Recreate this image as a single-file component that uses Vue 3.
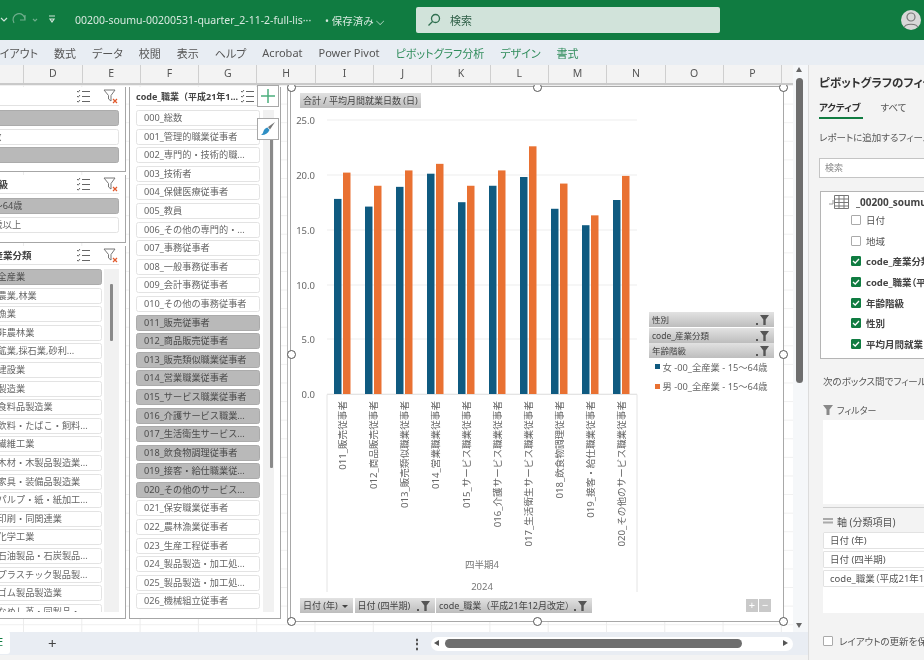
<template>
  <div class="app">
    <header class="titlebar">
      <div class="quick">
        <svg class="ic" width="60" height="24" viewBox="0 0 60 24" fill="none" stroke="#cfe3d8" stroke-width="1.2">
          <path d="M1 10l3 3 3-3" />
          <path d="M14 15a6 6 0 1 1 11-3M25 7v5h-5" stroke="#6fae8c" />
          <path d="M33 11l2 2 2-2" stroke="#6fae8c" />
          <path d="M49 8h6M50 11h4l-2 3z" />
        </svg>
      </div>
      <span class="filename">00200-soumu-00200531-quarter_2-11-2-full-lis···</span>
      <span class="saved">• 保存済み ⌵</span>
      <div class="search">
        <svg width="14" height="14" viewBox="0 0 14 14" fill="none" stroke="#2f6f4f" stroke-width="1.3">
          <circle cx="8.5" cy="5.5" r="4" />
          <path d="M5.5 8.5L1.5 12.5" />
        </svg>
        <span>検索</span>
      </div>
      <div class="avatar">
        <svg width="20" height="20" viewBox="0 0 20 20" fill="none" stroke="#777" stroke-width="1.2">
          <circle cx="10" cy="7" r="4" />
          <path d="M3 18c1-5 13-5 14 0" />
        </svg>
      </div>
    </header>

    <nav class="ribbon">
      <span v-for="t in tabs" :key="t">{{ t }}</span>
      <span v-for="t in contextTabs" :key="t" class="ctx">{{ t }}</span>
    </nav>

    <div class="body">
      <div class="workbook">
        <div class="middle">
          <div class="sheetcol">
            <div class="colhead">
              <span class="colstub"></span>
              <span v-for="c in columns" :key="c" class="col">{{ c }}</span>
            </div>

            <div class="sheet">
              <section v-for="s in slicers" :key="s.id" class="slicer" :class="s.id">
                <div class="slicer-head">
                  <b>{{ s.title }}</b>
                  <svg width="14" height="14" viewBox="0 0 14 14" fill="none" stroke="#666" stroke-width="1">
                    <path d="M1 2l1.2 1.2L4 1M1 7l1.2 1.2L4 6M1 12l1.2 1.2L4 11M6 2.5h8M6 7.5h8M6 12.5h8" />
                  </svg>
                  <svg v-if="s.clear" class="clear" width="15" height="15" viewBox="0 0 15 15" fill="none">
                    <path d="M1 1h11L8 6.5V12L5.5 10V6.5z" stroke="#777" />
                    <path d="M10 10l4 4M14 10l-4 4" stroke="#e2592b" stroke-width="1.2" />
                  </svg>
                </div>
                <div class="slicer-body">
                  <div class="slicer-list">
                    <div v-for="it in s.items" :key="it.label" class="item" :class="{ on: it.on }">{{ it.label }}</div>
                  </div>
                  <div v-if="s.scroll" class="track"><div class="thumb"></div></div>
                </div>
              </section>

              <div class="chart">
                <svg class="plot" width="492" height="534" viewBox="291 87 492 534" font-family="'Noto Sans', 'Noto Sans CJK JP', sans-serif">
                  <g v-for="t in ticks" :key="t.label">
                    <line x1="327" x2="637" :y1="t.y" :y2="t.y" stroke="#ededed" stroke-width="1.2" />
                    <text x="315" :y="t.y + 3.5" text-anchor="end" font-size="9.5" fill="#666">{{ t.label }}</text>
                  </g>
                  <path d="M327 592V394.5H637V592" fill="none" stroke="#e4e4e4" />
                  <g v-for="(g, i) in bars" :key="g.label">
                    <rect :x="334 + i * 31" :y="barY(g.f)" width="7.5" :height="394 - barY(g.f)" fill="#0f5a80" />
                    <rect :x="343 + i * 31" :y="barY(g.m)" width="7.5" :height="394 - barY(g.m)" fill="#e97132" />
                    <text :transform="`translate(${346 + i * 31} 401) rotate(-90)`" text-anchor="end" font-size="9.6" fill="#666">{{ g.label }}</text>
                  </g>
                  <text x="482" y="568" text-anchor="middle" font-size="9.5" fill="#777">四半期4</text>
                  <text x="482" y="590" text-anchor="middle" font-size="9.5" fill="#777">2024</text>
                </svg>

                <div class="field value-field">合計 / 平均月間就業日数 (日)</div>

                <div class="axis-fields">
                  <div class="field f1">日付 (年) <i class="drop"></i></div>
                  <div class="field f2">日付 (四半期)
                    <svg class="fun" width="13" height="10" viewBox="0 0 13 10"><path d="M0 8h2v2H0zM4 0h9L9.7 4.5V10H7.3V4.5z" fill="#555" /></svg>
                  </div>
                  <div class="field f3">code_職業（平成21年12月改定）
                    <svg class="fun" width="13" height="10" viewBox="0 0 13 10"><path d="M0 8h2v2H0zM4 0h9L9.7 4.5V10H7.3V4.5z" fill="#555" /></svg>
                  </div>
                </div>

                <div class="legend-area">
                  <div v-for="f in legendFields" :key="f" class="field lf">
                    {{ f }}
                    <svg class="fun" width="13" height="10" viewBox="0 0 13 10"><path d="M0 8h2v2H0zM4 0h9L9.7 4.5V10H7.3V4.5z" fill="#555" /></svg>
                  </div>
                  <div class="legend"><i class="sw blue"></i>女 -00_全産業 - 15～64歳</div>
                  <div class="legend"><i class="sw orange"></i>男 -00_全産業 - 15～64歳</div>
                </div>

                <div class="zoombtns"><span>+</span><span>−</span></div>

                <i v-for="h in handles" :key="h" class="handle" :class="h"></i>
              </div>

              <button class="tool plus">
                <svg width="16" height="16" viewBox="0 0 16 16"><path d="M8 1v14M1 8h14" stroke="#4caf7d" stroke-width="1.5" /></svg>
              </button>
              <button class="tool brush">
                <svg width="16" height="16" viewBox="0 0 16 16">
                  <path d="M15 1L8 6l2 2.5z" fill="#777" />
                  <path d="M7.5 6.5l2 2.5C8 13 4 14.5 1 14c2-1 2-3 3-5 1-1.5 2.5-2.5 3.5-2.5z" fill="#2f8fc4" />
                </svg>
              </button>
            </div>
          </div>

          <div class="vscroll">
            <i class="up"></i>
            <div class="vthumb"></div>
            <i class="down"></i>
          </div>
        </div>

        <footer class="tabbar">
          <div class="sheet-tab"><span>E</span></div>
          <span class="add">+</span>
          <span class="dots">⋮</span>
          <div class="hscroll">
            <i class="left"></i>
            <div class="hthumb"></div>
            <i class="right"></i>
          </div>
        </footer>
        <div class="statusbar"></div>
      </div>

      <aside class="pane">
        <h2>ピボットグラフのフィールド</h2>
        <div class="pane-tabs">
          <span class="active">アクティブ</span>
          <span>すべて</span>
        </div>
        <p class="hint">レポートに追加するフィールドを選択してください</p>
        <div class="pane-search">検索</div>
        <div class="tree">
          <div class="tree-root">
            <svg width="20" height="14" viewBox="0 0 20 14" fill="none">
              <path d="M4 5v4H0" stroke="#999" />
              <path d="M5.5 .5h14v13h-14zM5.500 4h14M5.5 7.5h14M5.5 11h14M10 .5v13M15 .5v13" stroke="#777" />
            </svg>
            <b>_00200_soumu_00200531</b>
          </div>
          <div v-for="f in fields" :key="f.label" class="tree-row" :class="{ on: f.on }">
            <i class="check">
              <svg v-if="f.on" width="10" height="10" viewBox="0 0 10 10" fill="none"><path d="M2 5l2.2 2L8 3" stroke="#fff" stroke-width="1.3" /></svg>
            </i>
            <span>{{ f.label }}</span>
          </div>
        </div>
        <p class="drag">次のボックス間でフィールドをドラッグしてください:</p>
        <div class="area-title">
          <svg width="10" height="10" viewBox="0 0 10 10"><path d="M0 0h10L6.5 4.5V10h-3V4.5z" fill="#888" /></svg>
          <span>フィルター</span>
        </div>
        <div class="area-box filter-box"></div>
        <div class="area-title axis">
          <svg width="10" height="10" viewBox="0 0 10 10"><path d="M0 1h10v2H0zM0 4.5h10v2H0z" fill="#aaa" /></svg>
          <span>軸 (分類項目)</span>
        </div>
        <div class="area-box axis-box">
          <div v-for="a in axisItems" :key="a" class="axis-item">{{ a }}</div>
        </div>
        <label class="defer"><i class="check"></i><span>レイアウトの更新を保留する</span></label>
      </aside>
    </div>
  </div>
</template>

<script setup>
const tabs = ["レイアウト", "数式", "データ", "校閲", "表示", "ヘルプ", "Acrobat", "Power Pivot"];
const contextTabs = ["ピボットグラフ分析", "デザイン", "書式"];
const columns = ["D", "E", "F", "G", "H", "I", "J", "K", "L", "M", "N", "O", "P"];

const toItems = (labels, selected = []) => labels.map((label) => ({ label, on: selected.includes(label) }));

const jobs = [
  "000_総数", "001_管理的職業従事者", "002_専門的・技術的職...", "003_技術者", "004_保健医療従事者",
  "005_教員", "006_その他の専門的・...", "007_事務従事者", "008_一般事務従事者", "009_会計事務従事者",
  "010_その他の事務従事者", "011_販売従事者", "012_商品販売従事者", "013_販売類似職業従事者", "014_営業職業従事者",
  "015_サービス職業従事者", "016_介護サービス職業...", "017_生活衛生サービス...", "018_飲食物調理従事者", "019_接客・給仕職業従...",
  "020_その他のサービス...", "021_保安職業従事者", "022_農林漁業従事者", "023_生産工程従事者", "024_製品製造・加工処...",
  "025_製品製造・加工処...", "026_機械組立従事者", "027_機械整備・修理従..."
];

const industries = [
  "00_全産業", "01_農業,林業", "02_漁業", "03_非農林業", "04_鉱業,採石業,砂利...", "05_建設業", "06_製造業",
  "07_食料品製造業", "08_飲料・たばこ・飼料...", "09_繊維工業", "10_木材・木製品製造業...", "11_家具・装備品製造業",
  "12_パルプ・紙・紙加工...", "13_印刷・同関連業", "14_化学工業", "15_石油製品・石炭製品...", "16_プラスチック製品製...",
  "17_ゴム製品製造業", "18_なめし革・同製品・..."
];

const slicers = [
  { id: "sex", title: "性別", clear: true, items: toItems(["女", "総数", "男"], ["女", "男"]) },
  { id: "age", title: "年齢階級", clear: true, items: toItems(["15～64歳", "65歳以上"], ["15～64歳"]) },
  { id: "ind", title: "code_産業分類", clear: true, scroll: true, items: toItems(industries, ["00_全産業"]) },
  { id: "job", title: "code_職業（平成21年1...", clear: false, scroll: true, items: toItems(jobs, jobs.slice(11, 21)) }
];

const ticks = [
  { label: "25.0", y: 120 },
  { label: "20.0", y: 175 },
  { label: "15.0", y: 230 },
  { label: "10.0", y: 285 },
  { label: "5.0", y: 339 },
  { label: "0.0", y: 394 }
];

const bars = [
  { label: "011_販売従事者", f: 17.8, m: 20.2 },
  { label: "012_商品販売従事者", f: 17.1, m: 19.0 },
  { label: "013_販売類似職業従事者", f: 18.9, m: 20.4 },
  { label: "014_営業職業従事者", f: 20.1, m: 21.0 },
  { label: "015_サービス職業従事者", f: 17.5, m: 19.0 },
  { label: "016_介護サービス職業従事者", f: 19.0, m: 20.4 },
  { label: "017_生活衛生サービス職業従事者", f: 19.8, m: 22.6 },
  { label: "018_飲食物調理従事者", f: 16.9, m: 19.2 },
  { label: "019_接客・給仕職業従事者", f: 15.4, m: 16.3 },
  { label: "020_その他のサービス職業従事者", f: 17.7, m: 19.9 }
];

const barY = (v) => 394 - v * 10.96;

const legendFields = ["性別", "code_産業分類", "年齢階級"];
const handles = ["tl", "tc", "tr", "ml", "mr", "bl", "bc", "br"];

const fields = [
  { label: "日付", on: false },
  { label: "地域", on: false },
  { label: "code_産業分類", on: true },
  { label: "code_職業（平成21年12月改定）", on: true },
  { label: "年齢階級", on: true },
  { label: "性別", on: true },
  { label: "平均月間就業日数（日）", on: true },
  { label: "日付 (月)", on: false }
];

const axisItems = ["日付 (年)", "日付 (四半期)", "code_職業（平成21年12月改定）"];
</script>

<style scoped>
.app {
  width: 924px;
  height: 660px;
  overflow: hidden;
  display: flex;
  flex-direction: column;
  font-family: "Noto Sans", "Noto Sans CJK JP", sans-serif;
  color: #444;
  background: #fff;
  filter: blur(0.55px);
}

/* title bar */
.titlebar {
  height: 40px;
  flex: none;
  background: #107c41;
  display: flex;
  align-items: center;
  position: relative;
  color: #d6e8de;
  font-size: 10.5px;
}
.quick {
  width: 75px;
  flex: none;
  display: flex;
}
.filename {
  width: 250px;
  flex: none;
  white-space: nowrap;
}
.saved {
  width: 91px;
  flex: none;
  white-space: nowrap;
}
.search {
  width: 304px;
  height: 26px;
  flex: none;
  box-sizing: border-box;
  background: #d1e3da;
  border-radius: 2px;
  display: flex;
  align-items: center;
  gap: 9px;
  padding-left: 11px;
  color: #2f5f47;
  font-size: 11px;
}
.avatar {
  position: absolute;
  left: 901px;
  top: 10px;
  width: 20px;
  height: 20px;
  border-radius: 50%;
  background: #d8d8d8;
  overflow: hidden;
}

/* ribbon tabs */
.ribbon {
  height: 25px;
  flex: none;
  box-sizing: border-box;
  background: #e8edf3;
  display: flex;
  align-items: center;
  gap: 16px;
  margin-left: -10px;
  width: 934px;
  font-size: 11px;
  font-feature-settings: "palt";
  color: #555;
  white-space: nowrap;
}
.ribbon .ctx {
  color: #2f8c5b;
}

.body {
  flex: 1;
  min-height: 0;
  display: flex;
}
.workbook {
  width: 808px;
  flex: none;
  display: flex;
  flex-direction: column;
}
.middle {
  flex: none;
  height: 567px;
  display: flex;
}
.sheetcol {
  width: 793px;
  flex: none;
  display: flex;
  flex-direction: column;
  overflow: hidden;
}
.colhead {
  height: 20px;
  flex: none;
  box-sizing: border-box;
  display: flex;
  background: #f3f3f3;
  border-bottom: 2px solid #c9c9c9;
  font-size: 10.5px;
  color: #555;
}
.colstub {
  width: 23.3px;
  flex: none;
  border-right: 1px solid #cfcfcf;
}
.col {
  width: 58.3px;
  flex: none;
  box-sizing: border-box;
  border-right: 1px solid #cfcfcf;
  text-align: center;
  line-height: 16px;
}

.sheet {
  flex: 1;
  position: relative;
  overflow: hidden;
  background-color: #fff;
  background-image:
    linear-gradient(to right, #ececec 1px, transparent 1px),
    linear-gradient(to bottom, #f0f0f0 1px, transparent 1px);
  background-size: 58.3px 18.6px;
  background-position: 23px 0;
}

/* slicers */
.slicer {
  position: absolute;
  box-sizing: border-box;
  background: #fff;
  border-right: 1.5px solid #a6a6a6;
  border-bottom: 1.5px solid #a6a6a6;
  border-left: 1.5px solid #a6a6a6;
  display: flex;
  flex-direction: column;
  padding: 0 6px;
}
.sex { left: -32px; top: 2px; width: 158px; height: 85px; }
.age { left: -32px; top: 90px; width: 158px; height: 68px; }
.ind { left: -32px; top: 161px; width: 158px; height: 373px; }
.job { left: 129px; top: 2px; width: 152px; height: 532px; }

.slicer-head {
  height: 18px;
  flex: none;
  display: flex;
  align-items: center;
  gap: 13px;
  border-bottom: 1.5px solid #e2e2e2;
  margin-bottom: 4px;
  font-size: 9.5px;
  color: #444;
  white-space: nowrap;
}
.slicer-head b {
  margin-right: auto;
}
.slicer-head svg {
  flex: none;
}
.slicer-head .clear {
  margin-right: 1px;
}
.age .slicer-head b {
  margin-left: -5px;
}
.ind .slicer-head b {
  margin-left: -8px;
}
.job .slicer-head {
  padding-right: 20px;
  font-size: 9px;
  gap: 0;
}

.slicer-body {
  flex: 1;
  min-height: 0;
  display: flex;
  margin-bottom: 6px;
  overflow: hidden;
}
.slicer-list {
  flex: 1;
  min-width: 0;
  display: flex;
  flex-direction: column;
  gap: 2.6px;
  overflow: hidden;
}
.item {
  height: 16px;
  flex: none;
  box-sizing: border-box;
  border: 1px solid #e3e3e3;
  border-radius: 2.5px;
  background: #fff;
  padding-left: 7px;
  font-size: 9.2px;
  line-height: 14px;
  white-space: nowrap;
  color: #666;
}
.item.on {
  background: #b9b9b9;
  border-color: #ababab;
  color: #4c4c4c;
}
.ind .slicer-list {
  margin-right: 2.5px;
}
.track {
  width: 15px;
  flex: none;
  background: #f1f1f1;
  position: relative;
}
.job .track {
  margin-left: 3px;
  margin-right: -4px;
}
.thumb {
  position: absolute;
  background: #8a8a8a;
  width: 3px;
  border-radius: 1px;
}
.ind .thumb { left: 6px; top: 15px; height: 57px; }
.job .thumb { left: 7px; top: 29px; height: 329px; }

/* chart */
.chart {
  position: absolute;
  left: 291px;
  top: 2px;
  width: 492px;
  height: 534px;
  background: #fff;
  outline: 1.5px solid #a8a8a8;
  box-shadow: -3px 0 0 0 #fff, -4px 0 0 0 #b8b8b8;
}
.plot {
  position: absolute;
  left: 0;
  top: 0;
  display: block;
}
.field {
  box-sizing: border-box;
  background: linear-gradient(#e2e2e2, #bdbdbd);
  font-size: 9px;
  line-height: 15px;
  height: 15px;
  color: #444;
  padding-left: 3px;
  white-space: nowrap;
  position: relative;
}
.value-field {
  position: absolute;
  left: 9px;
  top: 6px;
  width: 121px;
}
.axis-fields {
  position: absolute;
  left: 9px;
  top: 511px;
  display: flex;
  gap: 1.5px;
}
.f1 { width: 53px; }
.f2 { width: 80px; }
.f3 { width: 156px; }
.drop {
  display: inline-block;
  border: 3px solid transparent;
  border-top: 3.5px solid #444;
  border-bottom: 0;
  margin-left: 2px;
  vertical-align: 1px;
}
.fun {
  position: absolute;
  right: 5px;
  top: 3px;
}
.legend-area {
  position: absolute;
  left: 358px;
  top: 225px;
  width: 125px;
  display: flex;
  flex-direction: column;
  gap: 0.5px;
}
.lf {
  font-size: 8.5px;
}
.legend {
  display: flex;
  align-items: center;
  gap: 2.5px;
  height: 12px;
  margin: 2px 0 5px 6px;
  font-size: 9.3px;
  color: #666;
  white-space: nowrap;
}
.sw {
  width: 5px;
  height: 5px;
  flex: none;
}
.sw.blue { background: #0f5a80; }
.sw.orange { background: #e97132; }
.zoombtns {
  position: absolute;
  left: 455px;
  top: 512px;
  display: flex;
  gap: 1px;
}
.zoombtns span {
  width: 12px;
  height: 13px;
  background: #c9c9c9;
  color: #fff;
  font-size: 11px;
  line-height: 12px;
  text-align: center;
}
.handle {
  position: absolute;
  width: 9px;
  height: 9px;
  box-sizing: border-box;
  border: 1.5px solid #555;
  border-radius: 50%;
  background: #fff;
  margin: -4.5px 0 0 -4.5px;
}
.tl { left: 0; top: 0; }
.tc { left: 246px; top: 0; }
.tr { left: 492px; top: 0; }
.ml { left: 0; top: 267px; }
.mr { left: 492px; top: 267px; }
.bl { left: 0; top: 534px; }
.bc { left: 246px; top: 534px; }
.br { left: 492px; top: 534px; }

.tool {
  position: absolute;
  left: 257px;
  width: 22px;
  height: 22px;
  box-sizing: border-box;
  padding: 0;
  background: #fff;
  border: 1px solid #a8a8a8;
  display: flex;
  align-items: center;
  justify-content: center;
}
.plus { top: 0; }
.brush { top: 33px; }

/* sheet scrollbar */
.vscroll {
  width: 15px;
  flex: none;
  box-sizing: border-box;
  background: #f5f7f9;
  position: relative;
}
.vthumb {
  position: absolute;
  left: 3px;
  top: 13px;
  width: 7px;
  height: 305px;
  border-radius: 4px;
  background: #6e6e6e;
}
.up, .down {
  position: absolute;
  left: 3px;
  border: 3.5px solid transparent;
}
.up { top: 2px; border-bottom: 5px solid #666; border-top: 0; }
.down { top: 558px; border-top: 5px solid #666; border-bottom: 0; }

/* field pane */
.pane {
  flex: 1;
  min-width: 0;
  box-sizing: border-box;
  background: #f3f3f3;
  border-left: 1px solid #dcdcdc;
  padding: 0 0 0 10px;
  overflow: hidden;
  white-space: nowrap;
  font-size: 10px;
  font-feature-settings: "palt";
  color: #555;
}
.pane h2 {
  margin: 9px 0 0;
  font-size: 11.5px;
  line-height: 18px;
  color: #333;
}
.pane-tabs {
  display: flex;
  gap: 20px;
  margin-top: 8px;
  font-size: 9.5px;
  line-height: 16px;
  padding-bottom: 3px;
}
.pane-tabs .active {
  font-weight: 700;
  color: #333;
  position: relative;
}
.pane-tabs .active::after {
  content: "";
  position: absolute;
  left: 0;
  right: -2px;
  bottom: -3px;
  height: 2px;
  background: #107c41;
}
.hint {
  margin: 11px 0 0;
  font-size: 9.5px;
  line-height: 16px;
}
.pane-search {
  margin: 12px 0 0;
  height: 20px;
  box-sizing: border-box;
  width: 140px;
  background: #fff;
  border: 1px solid #c4c4c4;
  padding-left: 5px;
  line-height: 18px;
  font-size: 9px;
  color: #888;
}
.tree {
  margin: 13px 0 0 1px;
  height: 168px;
  box-sizing: border-box;
  width: 140px;
  background: #fff;
  border: 1px solid #b5b5b5;
  overflow: hidden;
  padding-left: 8px;
}
.tree-root {
  display: flex;
  align-items: center;
  gap: 7px;
  height: 17px;
  margin-top: 1px;
  font-size: 10px;
  color: #444;
}
.tree-root svg {
  flex: none;
}
.tree-row {
  height: 20.6px;
  display: flex;
  align-items: center;
  gap: 5px;
  padding-left: 22px;
  font-size: 9.5px;
}
.tree-row.on {
  font-weight: 700;
  color: #444;
}
.check {
  width: 10px;
  height: 10px;
  flex: none;
  box-sizing: border-box;
  border: 1px solid #aaa;
  background: #fff;
  border-radius: 1px;
}
.tree-row.on .check {
  background: #107c41;
  border-color: #107c41;
}
.check svg {
  display: block;
  margin: -1px;
}
.drag {
  margin: 15px 0 0 4px;
  font-size: 9.5px;
  line-height: 16px;
}
.area-title {
  display: flex;
  align-items: center;
  gap: 4px;
  margin: 12px 0 0 4px;
  height: 16px;
  font-size: 9px;
}
.area-title svg {
  flex: none;
}
.area-box {
  margin-left: 4px;
  background: #fff;
  width: 130px;
}
.filter-box {
  height: 84px;
  margin-top: 2px;
}
.area-title.axis {
  margin-top: 3px;
  padding-top: 5px;
  height: 17px;
  border-top: 1px solid #cfcfcf;
  font-size: 10px;
}
.axis-box {
  height: 81px;
  margin-top: 2px;
  display: flex;
  flex-direction: column;
  gap: 2px;
}
.axis-item {
  height: 17px;
  flex: none;
  box-sizing: border-box;
  border: 1px solid #e2e2e2;
  border-radius: 1px;
  padding-left: 6px;
  line-height: 15px;
  font-size: 9.5px;
}
.defer {
  display: flex;
  align-items: center;
  gap: 6px;
  margin: 21px 0 0 4px;
  font-size: 9.5px;
}

/* sheet tabs */
.tabbar {
  height: 23px;
  flex: none;
  background: #e9edf3;
  position: relative;
}
.sheet-tab {
  position: absolute;
  left: -20px;
  top: -1px;
  width: 30px;
  height: 23px;
  background: #fff;
  border-radius: 0 3px 3px 0;
  font-size: 11px;
  color: #107c41;
  text-align: right;
  padding-right: 7px;
  box-sizing: border-box;
  line-height: 22px;
}
.add {
  position: absolute;
  left: 48px;
  top: 1px;
  font-size: 15px;
  line-height: 20px;
  color: #444;
}
.dots {
  position: absolute;
  left: 410px;
  top: 1px;
  font-size: 14px;
  font-weight: 700;
  line-height: 22px;
  color: #555;
}
.hscroll {
  position: absolute;
  left: 431px;
  top: 5px;
  width: 362px;
  height: 14px;
  background: #fff;
  border-radius: 7px;
}
.hthumb {
  position: absolute;
  left: 14px;
  top: 2px;
  width: 297px;
  height: 9px;
  border-radius: 5px;
  background: #6e6e6e;
}
.left, .right {
  position: absolute;
  top: 3px;
  border: 3.5px solid transparent;
}
.left { left: 3px; border-right: 5px solid #555; border-left: 0; }
.right { left: 352px; border-left: 5px solid #555; border-right: 0; }
.statusbar {
  flex: 1;
  background: #f3f3f3;
}
</style>

<style>
html, body {
  margin: 0;
  background: #fff;
  overflow: hidden;
}
</style>
